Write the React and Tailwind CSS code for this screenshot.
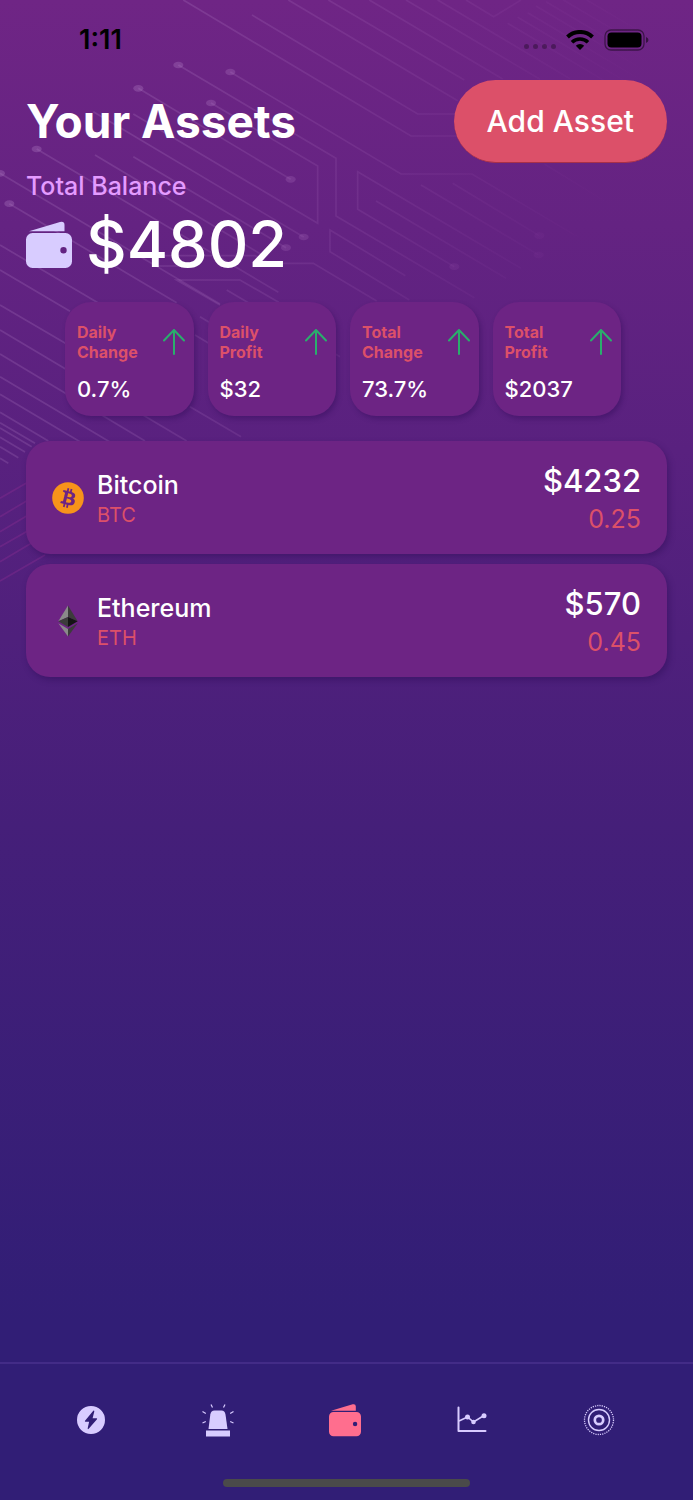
const stats = [
  { id: "daily-change", period: "Daily", kind: "Change", value: "0.7%" },
  { id: "daily-profit", period: "Daily", kind: "Profit", value: "$32" },
  { id: "total-change", period: "Total", kind: "Change", value: "73.7%" },
  { id: "total-profit", period: "Total", kind: "Profit", value: "$2037" },
];

const assets = [
  { symbol: "BTC", name: "Bitcoin", value: "$4232", amount: "0.25", icon: BitcoinIcon },
  { symbol: "ETH", name: "Ethereum", value: "$570", amount: "0.45", icon: EthereumIcon },
];

const tabs = [
  { label: "Activity", icon: BoltIcon },
  { label: "Alerts", icon: SirenIcon },
  { label: "Assets", icon: WalletIcon, active: true },
  { label: "Charts", icon: ChartIcon },
  { label: "Settings", icon: TargetIcon },
];

const traces = [
  "M550 0L1233 408H1400",
  "M756 45L1253 342H1400",
  "M865 0L1373 302",
  "M985 0L1393 240",
  "M1108 0L1508 237",
  "M1218 0L1620 238",
  "M1313 0L1710 236",
  "M1398 0L1481 50L1563 0",
  "M1523 70L1860 270",
  "M1553 52L1900 258",
  "M1583 38L1950 256",
  "M1608 18L1990 245",
  "M1638 5L2010 226",
  "M1690 0L2030 200",
  "M1760 0L2050 170",
  "M691 216L1203 522H1416L1733 710",
  "M1633 492L1858 630",
  "M1828 490L1953 575",
  "M535 195L1008 475V648L1423 893",
  "M633 309L953 498V670L400 342",
  "M415 265L872 538",
  "M280 335L911 711",
  "M400 470L858 743",
  "M1363 800L1073 628V515L1563 805",
  "M1128 603L1518 835",
  "M1263 555L1616 765",
  "M1358 550L1618 707",
  "M1216 827L990 690V755L1228 900",
  "M285 465L790 767",
  "M480 767H765L810 790H940L1130 903",
  "M470 798H575",
  "M660 915L530 840H720L836 907",
  "M680 870L1020 1070",
  "M110 447L835 877",
  "M0 520L660 912",
  "M28 611L530 908",
  "M600 950L640 974",
  "M585 1005L640 1038",
  "M0 735L300 912",
  "M0 810L210 934",
  "M0 915L200 1032",
  "M570 1220L723 1310",
  "M0 990L560 1323",
  "M0 1062L435 1323",
  "M0 1130L340 1332",
  "M0 1183L240 1325",
  "M0 1237L145 1323",
  "M0 1268L105 1330",
  "M0 1284L95 1340",
  "M0 1312L75 1356",
  "M0 1340L55 1373",
  "M0 1375L25 1390",
];

const risers = [
  "M0 1495L100 1437",
  "M0 1550L100 1491",
  "M0 1595L100 1536",
  "M0 1640L100 1583",
  "M0 1685L100 1626",
  "M0 1743L135 1665",
];

const nodes = [
  [535, 195], [691, 216], [415, 265], [633, 309], [110, 447], [0, 520],
  [28, 611], [872, 538], [911, 711], [858, 743], [1363, 800], [1616, 765],
  [1618, 707],
];

function CircuitPattern() {
  return (
    <svg
      className="absolute inset-x-0 top-0 w-full"
      viewBox="0 0 2079 1800"
      fill="none"
      aria-hidden="true"
    >
      <defs>
        <linearGradient id="fade" gradientUnits="userSpaceOnUse" x1="500" y1="300" x2="1900" y2="700">
          <stop offset="0" stopColor="#b583c8" stopOpacity="0.3" />
          <stop offset="0.5" stopColor="#b070c0" stopOpacity="0.18" />
          <stop offset="1" stopColor="#a040b0" stopOpacity="0" />
        </linearGradient>
      </defs>
      <g stroke="url(#fade)" strokeWidth="5" opacity="0.75">
        {traces.map((d) => (
          <path key={d} d={d} />
        ))}
      </g>
      <g stroke="#8a2c92" strokeOpacity="0.4" strokeWidth="5">
        {risers.map((d) => (
          <path key={d} d={d} />
        ))}
      </g>
      <g fill="url(#fade)">
        {nodes.map(([x, y]) => (
          <ellipse key={`${x}-${y}`} cx={x} cy={y} rx="15" ry="10" />
        ))}
      </g>
    </svg>
  );
}

function WalletIcon({ className = "h-[34px] w-8" }) {
  return (
    <svg className={className} viewBox="0 0 46 47" fill="currentColor" aria-hidden="true">
      <path d="M3 10.300 34 1Q38.500 0 38.500 4V10.300Z" />
      <path
        fillRule="evenodd"
        d="M6.500 12h33a6.500 6.500 0 0 1 6.500 6.500v22a6.500 6.500 0 0 1-6.500 6.500h-33A6.500 6.500 0 0 1 0 40.500v-22A6.500 6.500 0 0 1 6.500 12Zm31 14a3.200 3.200 0 1 0 0 6.400a3.200 3.200 0 1 0 0-6.400Z"
      />
    </svg>
  );
}

function BoltIcon() {
  return (
    <svg className="size-7" viewBox="0 0 28 28" fill="currentColor" aria-hidden="true">
      <path
        fillRule="evenodd"
        d="M14 0a14 14 0 1 0 0 28a14 14 0 1 0 0-28ZM16.300 4.800 8 14.800q-.5.900.5.900h3.600L10.700 22.300q0 1.400 1 .5L20 13.200q.5-.9-.5-.9h-3.900L17.300 5.400q0-1.400-1-.6Z"
      />
    </svg>
  );
}

function SirenIcon() {
  return (
    <svg className="h-[34px] w-8" viewBox="0 0 32 34" fill="currentColor" aria-hidden="true">
      <path d="M6.500 26 8.300 11.500Q9 7.500 12.500 7.500h7q3.300 0 4 4L25.500 26Z" />
      <path d="M4 27.500h24V33.500H4Z" />
      <path
        d="m9 1.500 1.500 3M23 1.500 21.500 4.500M.5 8.500l3.300 2M31.500 8.500l-3.300 2M.5 20l3.300-1.500M31.500 20l-3.300-1.500"
        stroke="currentColor"
        strokeWidth="1.200"
      />
    </svg>
  );
}

function ChartIcon() {
  return (
    <svg className="h-[27px] w-[30px]" viewBox="0 0 30 27" fill="none" stroke="currentColor" aria-hidden="true">
      <path d="M1.500 1.500V25H28.500" strokeWidth="2" strokeLinecap="round" strokeLinejoin="round" />
      <path d="m2 15 8.500-4 6 5L27 9.500" strokeWidth="1.500" />
      <g fill="currentColor" stroke="none">
        <circle cx="10.500" cy="11" r="2.500" />
        <circle cx="16.500" cy="16" r="2.300" />
        <circle cx="27" cy="9.700" r="2.500" />
      </g>
    </svg>
  );
}

function TargetIcon() {
  return (
    <svg className="size-8" viewBox="0 0 32 32" fill="none" stroke="currentColor" aria-hidden="true">
      <circle cx="16" cy="16" r="4.200" strokeWidth="2.700" />
      <circle cx="16" cy="16" r="10.500" strokeWidth="1.400" />
      <circle cx="16" cy="16" r="14.500" strokeWidth="1.300" strokeDasharray="1.200 1.078" />
    </svg>
  );
}

function BitcoinIcon() {
  return (
    <svg className="size-8" viewBox="0 0 32 32" aria-hidden="true">
      <circle cx="16" cy="16" r="15.800" fill="#f7931a" />
      <path
        fill="#6d2484"
        d="M23.189 14.020c.314-2.096-1.283-3.223-3.465-3.975l.708-2.840-1.728-.430-.690 2.765c-.454-.114-.920-.220-1.385-.326l.695-2.783L15.596 6l-.708 2.839c-.376-.086-.746-.170-1.104-.260l.002-.009-2.384-.595-.460 1.846s1.283.294 1.256.312c.700.175.826.638.805 1.006l-.806 3.235c.048.012.110.030.180.057l-.183-.045-1.130 4.532c-.086.212-.303.531-.793.410.018.025-1.256-.313-1.256-.313l-.858 1.978 2.250.561c.418.105.828.215 1.231.318l-.715 2.872 1.727.430.708-2.840c.472.127.930.245 1.378.357l-.706 2.828 1.728.430.715-2.866c2.948.558 5.164.333 6.097-2.333.752-2.146-.037-3.385-1.588-4.192 1.130-.260 1.980-1.003 2.207-2.538zm-3.950 5.538c-.533 2.147-4.148.986-5.320.695l.950-3.805c1.172.293 4.929.872 4.370 3.110zm.535-5.569c-.487 1.953-3.495.960-4.470.717l.860-3.450c.975.243 4.118.696 3.610 2.733z"
      />
    </svg>
  );
}

function EthereumIcon() {
  return (
    <svg className="size-8" viewBox="0 0 32 32" aria-hidden="true">
      <path fill="#8a8a8a" d="M16 .5 6.300 16.300 16 12Z" />
      <path fill="#3c3c3b" d="M16 .5V12l9.700 4.300Z" />
      <path fill="#3c3c3b" d="M6.300 16.300 16 12v10Z" />
      <path fill="#141414" d="M16 12v10l9.700-5.700Z" />
      <path fill="#8a8a8a" d="M6.300 18.200 16 23.900v7.600Z" />
      <path fill="#3c3c3b" d="M16 23.900v7.600l9.700-13.300Z" />
    </svg>
  );
}

function ArrowUpIcon() {
  return (
    <svg
      className="mt-[7px] h-[26px] w-[22px] shrink-0"
      viewBox="0 0 22 26"
      fill="none"
      stroke="#2aae6c"
      strokeWidth="2"
      strokeLinecap="round"
      strokeLinejoin="round"
      aria-hidden="true"
    >
      <path d="M11 25V1M1 11.500 11 1l10 10.500" />
    </svg>
  );
}

function StatusBar() {
  return (
    <div className="flex h-20 items-center justify-between pr-11 pl-[79px] text-black">
      <span className="text-[27px] font-semibold">1:11</span>
      <div className="flex items-center gap-[10px]">
        <div className="flex gap-1 pt-3">
          <span className="size-[5px] rounded-full bg-black/30" />
          <span className="size-[5px] rounded-full bg-black/30" />
          <span className="size-[5px] rounded-full bg-black/30" />
          <span className="size-[5px] rounded-full bg-black/30" />
        </div>
        <svg className="h-5 w-7" viewBox="0 0 28 20" fill="none" stroke="#000" aria-hidden="true">
          <path d="M1.500 7a18 18 0 0 1 25 0" strokeWidth="4" />
          <path d="M6 12.200a11.500 11.500 0 0 1 16 0" strokeWidth="3.600" />
          <path d="M14 20 9.800 15.800a6 6 0 0 1 8.400 0Z" fill="#000" stroke="none" />
        </svg>
        <svg className="h-[22px] w-[45px]" viewBox="0 0 45 22" aria-hidden="true">
          <rect x="1" y="1" width="39" height="20" rx="6" fill="none" stroke="#000" strokeOpacity="0.45" strokeWidth="1.300" />
          <rect x="3.500" y="3.500" width="34" height="15" rx="4" />
          <path d="M42 8q2.500 1 2.500 3t-2.500 3Z" fillOpacity="0.5" />
        </svg>
      </div>
    </div>
  );
}

function StatCard({ stat }) {
  return (
    <li className="flex h-[114px] justify-between rounded-[26px] bg-[#6d2484] pt-5 pr-[9px] pl-3 shadow-[2px_3px_5px_rgba(40,10,80,0.35)]">
      <div>
        <h2 className="text-base leading-5 font-bold text-[#dc5069]">
          {stat.period}
          <br />
          {stat.kind}
        </h2>
        <p className="mt-[15px] text-[22px] leading-6 font-medium">{stat.value}</p>
      </div>
      <ArrowUpIcon />
    </li>
  );
}

function AssetRow({ asset }) {
  const Icon = asset.icon;

  return (
    <li className="flex h-[113px] items-center rounded-[24px] bg-[#6d2484] px-[26px] shadow-[2px_3px_6px_rgba(40,10,80,0.4)]">
      <Icon />
      <div className="ml-[13px] pt-[3px]">
        <h3 className="text-[25px] leading-8 font-medium">{asset.name}</h3>
        <p className="text-[20px] leading-7 text-[#dc5069]">{asset.symbol}</p>
      </div>
      <div className="ml-auto pt-[3px] text-right">
        <p className="text-[31px] leading-10 font-medium">{asset.value}</p>
        <p className="text-[25px] leading-9 text-[#dc5069]">{asset.amount}</p>
      </div>
    </li>
  );
}

export default function App() {
  return (
    <div className="relative flex min-h-screen flex-col bg-[linear-gradient(180deg,#6f2585_0%,#59217f_30%,#451f79_55%,#311e76_88%)] font-['Inter',sans-serif] text-white">
      <CircuitPattern />

      <div className="relative flex flex-1 flex-col">
        <StatusBar />

        <main className="flex-1">
          <div className="px-[26px]">
            <div className="flex items-center justify-between">
              <h1 className="text-[46px] font-bold">Your Assets</h1>
              <button
                type="button"
                className="h-[83px] rounded-full border-b border-[#a83048] bg-[#dc5069] px-[33px] text-[30px] font-medium"
              >
                Add Asset
              </button>
            </div>
            <p className="mt-[7px] text-[25px] leading-8 font-medium text-[#e49bff]">
              Total Balance
            </p>
            <div className="mt-1 flex h-[76px] items-center gap-[14px]">
              <WalletIcon className="h-[47px] w-[46px] text-[#d8ccff]" />
              <p className="text-[63px] font-medium">$4802</p>
            </div>
          </div>

          <ul className="mt-5 grid grid-cols-4 gap-[14px] pr-[72px] pl-[65px]">
            {stats.map((stat) => (
              <StatCard key={stat.id} stat={stat} />
            ))}
          </ul>

          <ul className="mt-[25px] space-y-[10px] px-[26px]">
            {assets.map((asset) => (
              <AssetRow key={asset.symbol} asset={asset} />
            ))}
          </ul>
        </main>

        <nav className="border-t-2 border-[#432c87] bg-[#311e76]">
          <ul className="grid h-[111px] grid-cols-5 pr-[31px] pl-[27px]">
            {tabs.map(({ label, icon: Icon, active }) => (
              <li key={label}>
                <button
                  type="button"
                  aria-label={label}
                  className={`flex size-full items-center justify-center ${
                    active ? "text-[#ff6e8e]" : "text-[#d8ccff]"
                  }`}
                >
                  <Icon />
                </button>
              </li>
            ))}
          </ul>
          <div className="mx-auto mt-1 mb-[13px] h-2 w-[247px] rounded-full bg-[#4a4a4a]" />
        </nav>
      </div>
    </div>
  );
}
